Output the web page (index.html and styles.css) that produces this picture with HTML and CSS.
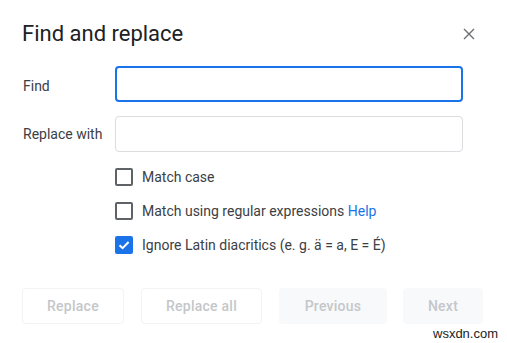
FILE: index.html
```html
<!DOCTYPE html>
<html>
<head>
<meta charset="utf-8">
<link rel="stylesheet" href="styles.css">
</head>
<body>
<div class="dialog">
  <div class="header">
    <h1 class="title">Find and replace</h1>
    <svg class="close" width="12" height="12" viewBox="0 0 12 12"><path d="M1 1 L11 11 M11 1 L1 11" stroke="#6b6e72" stroke-width="1.4" fill="none"/></svg>
  </div>
  <div class="fields">
    <div class="row">
      <label class="label label-find">Find</label>
      <div class="input focused"></div>
    </div>
    <div class="row">
      <label class="label">Replace with</label>
      <div class="input"></div>
    </div>
  </div>
  <div class="options">
    <div class="option"><span class="box"></span><span class="otext">Match case</span></div>
    <div class="option"><span class="box"></span><span class="otext">Match using regular expressions <a class="help">Help</a></span></div>
    <div class="option"><span class="box checked"><svg width="14" height="14" viewBox="0 0 14 14"><path d="M2.5 7.2 L5.6 10.2 L11.6 4" stroke="#fff" stroke-width="2" fill="none"/></svg></span><span class="otext">Ignore Latin diacritics (e. g. ä = a, E = É)</span></div>
  </div>
  <div class="buttons">
    <div class="btn outline w1">Replace</div>
    <div class="btn outline w2">Replace all</div>
    <div class="btn filled w3">Previous</div>
    <div class="btn filled w4">Next</div>
  </div>
</div>
<div class="watermark">wsxdn.com</div>
</body>
</html>
```
FILE: styles.css
```css
html, body {
  margin: 0;
  padding: 0;
  background: #fff;
  width: 507px;
  height: 343px;
  overflow: hidden;
  font-family: Roboto, "Liberation Sans", sans-serif;
}
.dialog {
  padding: 20px 0 0 22px;
}
.header {
  display: flex;
  align-items: center;
  justify-content: space-between;
  width: 453px;
  height: 28px;
}
.title {
  margin: 0;
  font-weight: 400;
  font-size: 22px;
  line-height: 28px;
  color: #202124;
}
.close {
  display: block;
}
.fields {
  margin-top: 18px;
  display: flex;
  flex-direction: column;
  gap: 14px;
  width: 441px;
}
.row {
  display: flex;
  align-items: center;
}
.label {
  width: 93px;
  font-size: 14px;
  color: #3c4043;
  padding-left: 1px;
  box-sizing: border-box;
}
.label-find {
  padding-top: 4px;
}
.input {
  flex: 1;
  height: 36px;
  box-sizing: border-box;
  border: 1px solid #dadce0;
  border-radius: 4px;
}
.input.focused {
  border: 2px solid #1a73e8;
}
.options {
  margin-top: 8px;
  padding-left: 93px;
}
.option {
  display: flex;
  align-items: center;
  height: 34px;
}
.box {
  width: 18px;
  height: 18px;
  box-sizing: border-box;
  border: 2px solid #5f6368;
  border-radius: 2px;
  margin-right: 9px;
  display: flex;
  align-items: center;
  justify-content: center;
}
.box.checked {
  background: #1a73e8;
  border-color: #1a73e8;
}
.otext {
  font-size: 14px;
  color: #3c4043;
}
.help {
  color: #1a73e8;
}
.buttons {
  margin-top: 26px;
  display: flex;
  gap: 17px;
}
.btn {
  height: 36px;
  box-sizing: border-box;
  border-radius: 4px;
  display: flex;
  align-items: center;
  justify-content: center;
  font-size: 14px;
  font-weight: 500;
  color: #c4c7ca;
  letter-spacing: 0.25px;
}
.btn.outline {
  border: 1px solid #f1f3f4;
  background: #fff;
}
.btn.filled {
  background: #f8f9fa;
}
.w1 { width: 102px; }
.w2 { width: 121px; }
.w3 { width: 108px; }
.w4 { width: 80px; margin-left: -1px; }
.watermark {
  position: absolute;
  left: 433px;
  top: 326px;
  font-family: "Liberation Sans", Arial, sans-serif;
  font-size: 13px;
  color: #222;
}
```
